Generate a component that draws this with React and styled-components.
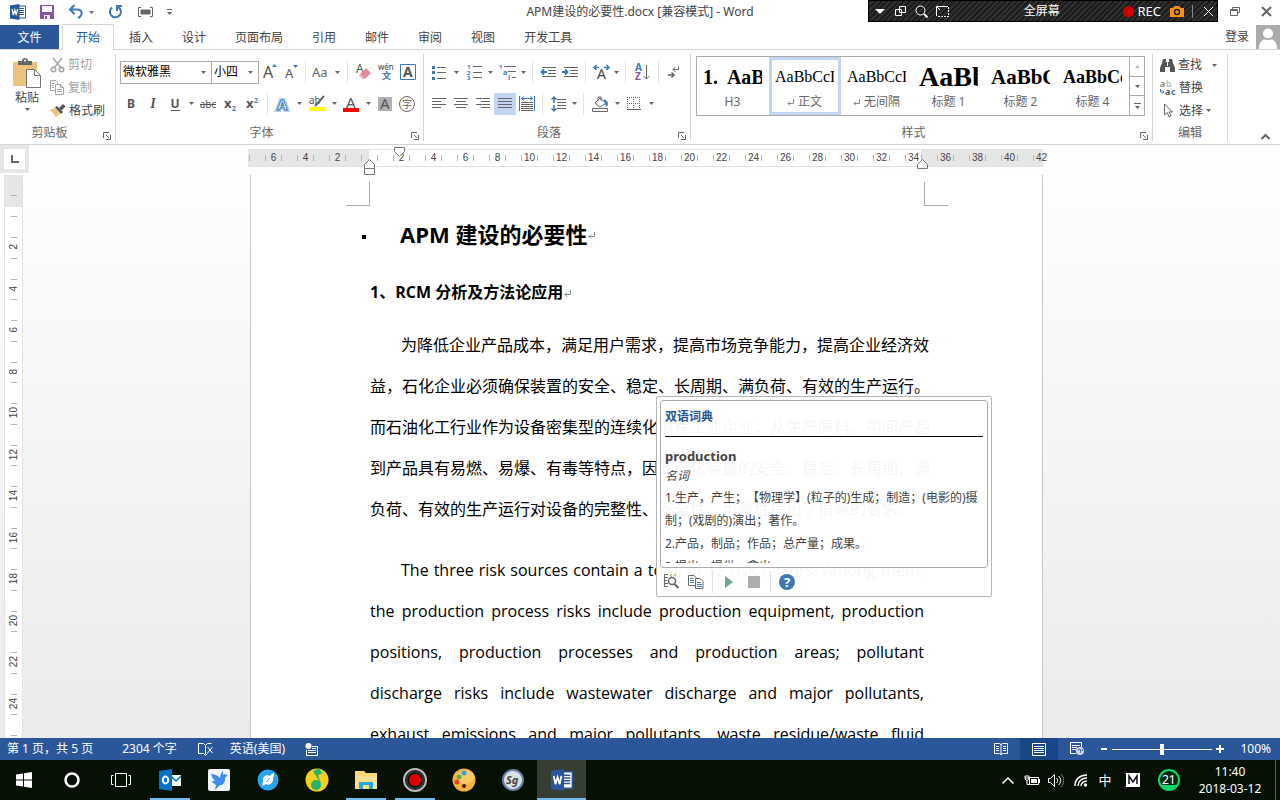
import React from 'react'
import styled, { createGlobalStyle, css } from 'styled-components'

const blue = '#2b579a'
const iconBlue = '#3e78b3'
const midGrey = '#666'
const line = '#d5d5d5'
const uiFont = '"Noto Sans", "Noto Sans CJK SC", sans-serif'
const bodyFont = '"Open Sans", "Noto Sans CJK SC", sans-serif'

const GlobalStyle = createGlobalStyle`
  * { box-sizing: border-box; }
  body {
    margin: 0;
    font: 12px/16px ${uiFont};
    color: #444;
    background: #fff;
    text-spacing-trim: space-all;
  }
  button, select, input {
    font: inherit;
    color: inherit;
    margin: 0;
    padding: 0;
    border: 0;
    background: none;
  }
  svg { display: block; flex: none; overflow: visible; }
  h1, h2, p { margin: 0; }
`

const Shell = styled.div`
  display: flex;
  flex-direction: column;
  height: 100vh;
  overflow: hidden;
`

/* title bar */

const TitleBar = styled.header`
  display: grid;
  grid-template-columns: 1fr auto 1fr;
  height: 24px;
  flex: none;
`

const QuickAccess = styled.div`
  display: flex;
  align-items: center;
  padding-left: 8px;
`

const Title = styled.div`
  line-height: 24px;
  white-space: nowrap;
`

const WindowControls = styled.div`
  display: flex;
  justify-content: flex-end;
`

const Recorder = styled.div`
  display: flex;
  align-items: center;
  width: 350px;
  height: 22px;
  border: 1px solid #000;
  color: #fff;
  background: repeating-linear-gradient(135deg, #1c1c1c 0 2px, #303030 2px 4px);
`

const RecorderTitle = styled.span`
  flex: 1;
  padding-left: 8px;
  text-align: center;
`

const RecLabel = styled.button`
  display: flex;
  align-items: center;
  gap: 3px;
  margin-right: 7px;
  font-size: 13px;
`

const RecDot = styled.span`
  width: 11px;
  height: 11px;
  border-radius: 50%;
  background: #d00000;
`

const IconButton = styled.button`
  display: flex;
  align-items: center;
  justify-content: center;
  flex: none;
  width: ${p => p.$w || 22}px;
  height: 22px;
  background: ${p => (p.$on ? '#c2d5f2' : 'none')};
`

/* tabs */

const TabRow = styled.nav`
  display: flex;
  height: 26px;
  flex: none;
  align-items: flex-end;
  border-bottom: 1px solid ${line};
`

const Tab = styled.button`
  height: 24px;
  padding: 0 13px;
  margin-right: 1px;
  border: 1px solid transparent;
  border-bottom: 0;
  ${p => p.$file && css`
    width: 59px;
    margin-right: 3px;
    color: #fff;
    background: ${blue};
  `}
  ${p => p.$active && css`
    height: 26px;
    margin-bottom: -1px;
    color: ${blue};
    border-color: ${line};
    background: #fff;
  `}
`

const Account = styled.a`
  display: flex;
  align-items: center;
  gap: 7px;
  margin-left: auto;
  color: #444;
  text-decoration: none;
`

/* ribbon */

const Ribbon = styled.section`
  display: flex;
  position: relative;
  height: 95px;
  flex: none;
  padding-top: 4px;
  border-bottom: 1px solid ${line};
`

const Group = styled.div`
  display: flex;
  flex-direction: column;
  flex: none;
  width: ${p => p.$w}px;
  height: 87px;
  border-right: 1px solid ${line};
`

const GroupBody = styled.div`
  flex: 1;
  padding-left: ${p => p.$left || 3}px;
`

const GroupLabel = styled.div`
  display: flex;
  height: 16px;
  color: #666;

  span {
    flex: 1;
    text-align: center;
  }
`

const Launcher = styled.button`
  display: flex;
  align-items: flex-end;
  justify-content: center;
  width: 16px;
  height: 15px;
`

const ToolRow = styled.div`
  display: flex;
  align-items: center;
  height: ${p => p.$h}px;
`

const Divider = styled.span`
  width: 1px;
  height: 22px;
  margin: 0 ${p => p.$m || 4}px;
  background: #e1e1e1;
`

const Combo = styled.label`
  display: flex;
  position: relative;
  width: ${p => p.$w}px;
  height: 23px;
  margin-right: -1px;
  border: 1px solid #ababab;

  select {
    appearance: none;
    width: 100%;
    padding-left: 2px;
    color: #000;
  }
  svg {
    position: absolute;
    right: 5px;
    top: 9px;
    pointer-events: none;
  }
`

const Clipboard = styled.div`
  display: flex;
  gap: 6px;
`

const PasteButton = styled.button`
  display: flex;
  flex-direction: column;
  align-items: center;
  width: 34px;
  padding-top: 4px;
  gap: 2px;
`

const SmallStack = styled.div`
  display: flex;
  flex-direction: column;
`

const SmallTool = styled.button`
  display: flex;
  align-items: center;
  gap: 3px;
  height: ${p => p.$h || 22}px;
  color: ${p => (p.$off ? '#a0a0a0' : '#444')};
  white-space: nowrap;

  > svg:last-child {
    margin-left: ${p => p.$caret || 0}px;
  }
`

const Gallery = styled.div`
  display: flex;
  width: 449px;
  height: 60px;
  margin-top: 2px;
  border: 1px solid #ababab;
`

const StyleCell = styled.button`
  display: flex;
  flex-direction: column;
  width: 72px;
  height: 58px;
  padding: 0 4px 0 3px;
  border: 3px solid ${p => (p.$on ? '#c2d5f2' : 'transparent')};
  color: #666;
`

const Sample = styled.span`
  width: 100%;
  height: 34px;
  overflow: hidden;
  text-align: left;
  white-space: pre;
  color: #000;
  font-family: "Liberation Serif", serif;
  font-size: ${p => p.$size}px;
  font-weight: ${p => (p.$bold ? 700 : 400)};
  line-height: 34px;
`

const StyleName = styled.span`
  display: flex;
  align-items: center;
  justify-content: center;
  gap: 4px;
  width: 100%;
`

const GalleryScroll = styled.div`
  display: flex;
  flex-direction: column;
  margin-left: auto;
  border-left: 1px solid #ababab;

  button {
    width: 14px;
    flex: 1;
    display: flex;
    align-items: center;
    justify-content: center;
  }
  button + button { border-top: 1px solid #ababab; }
`

const CollapseButton = styled.button`
  align-self: flex-end;
  margin-left: auto;
  padding: 0 10px 4px;
`

/* document area */

const Workspace = styled.main`
  display: grid;
  grid-template-columns: 28px 1fr 15px;
  grid-template-rows: 30px 1fr;
  flex: 1;
  min-height: 0;
  overflow: hidden;
  background: linear-gradient(#fff, #ebebeb);
`

const TabStop = styled.button`
  display: flex;
  align-items: center;
  justify-content: center;
  width: 29px;
  height: 28px;
  border: 4px solid #e6e6e6;
  background: #fff;
`

const RulerRow = styled.div`
  grid-column: 2 / 4;
  display: flex;
  justify-content: center;
  padding: 4px 17px 0 0;
`

const Ruler = styled.div`
  position: relative;
  display: flex;
  width: 795px;
  height: 18px;
  padding-left: 1px;
  border: solid #e1e1e1;
  border-width: 1px 0;
  background: linear-gradient(90deg, #e6e6e6 121px, #fff 121px 673px, #e6e6e6 673px);
`

const RulerCell = styled.span`
  display: grid;
  grid-template-columns: 16px 16px;
  align-items: center;
  flex: none;
  font: 10px/16px "Liberation Sans", sans-serif;
  text-align: center;

  i {
    height: 6px;
    border-left: 1px solid #b5b5b5;
  }
  b {
    display: flex;
    align-items: center;
    justify-content: center;
    font-weight: 400;
  }
  b::before {
    content: '';
    height: 6px;
    border-left: 1px solid #b5b5b5;
    margin-right: auto;
  }
  b::after {
    content: '';
    margin-left: auto;
  }
`

const RulerNumber = styled.span`
  width: 14px;
  margin: 0 -1px;
`

const Marker = styled.span`
  position: absolute;
  left: ${p => p.$x}px;
  top: ${p => p.$y}px;
`

const SideRuler = styled.div`
  width: 19px;
  margin-left: 4px;
  overflow: hidden;
  border: solid #e1e1e1;
  border-width: 0 1px;
  background: linear-gradient(#e6e6e6 32px, #fff 32px);
`

const SideStart = styled.div`
  height: 41px;
  padding-top: 20px;

  &::before {
    content: '';
    display: block;
    width: 6px;
    margin: 0 auto;
    border-top: 1px solid #b5b5b5;
  }
`

const SideCell = styled.div`
  display: grid;
  grid-template-rows: 21px 1fr;
  justify-items: center;
  height: 42px;
  font: 10px/10px "Liberation Sans", sans-serif;

  &:nth-child(odd) { height: 41px; }

  i {
    width: 6px;
    height: 1px;
    background: #b5b5b5;
  }
  b {
    display: flex;
    flex-direction: column;
    align-items: center;
    font-weight: 400;
  }
  b::before {
    content: '';
    width: 6px;
    height: 1px;
    margin-bottom: 4px;
    background: #b5b5b5;
  }
  span {
    writing-mode: vertical-rl;
    transform: rotate(180deg);
    margin-top: ${p => (p.$wide ? -1 : 2)}px;
  }
`

const PageHolder = styled.div`
  display: flex;
  justify-content: center;
`

const Page = styled.article`
  position: relative;
  width: 793px;
  border: solid #c6c6c6;
  border-width: 0 1px;
  background: #fff;
  color: #000;
  font: 16px/41px ${bodyFont};
`

const CropMarks = styled.div`
  display: flex;
  justify-content: space-between;
  padding: 7px 94px 0 95px;

  span {
    width: 24px;
    height: 24px;
    border: solid #ababab;
    border-width: 0 1px 1px 0;
  }
  span + span { border-width: 0 0 1px 1px; }
`

const TextArea = styled.div`
  padding: 8px 118px 0 119px;
`

const DocTitle = styled.h1`
  display: flex;
  align-items: center;
  gap: 1px;
  margin-left: -8px;
  font-size: 22px;
  line-height: 41px;

  &::before {
    content: '';
    width: 4px;
    height: 4px;
    margin: 4px 33px 0 0;
    background: #000;
  }
`

const DocHeading = styled.h2`
  display: flex;
  align-items: center;
  gap: 1px;
  margin: 17px 0 12px;
  font-size: 16px;
`

const Paragraph = styled.p`
  margin-bottom: 20px;
`

const Line = styled.span`
  display: block;
  white-space: nowrap;
  text-align: justify;
  text-align-last: ${p => (p.$last ? 'left' : 'justify')};
  padding-left: ${p => (p.$indent ? 31 : 0)}px;
`

/* dictionary pop-up */

const Popup = styled.aside`
  position: absolute;
  left: 405px;
  top: 221px;
  width: 336px;
  height: 201px;
  padding: 3px;
  border: 1px solid #b5b5b5;
  border-radius: 2px;
  background: rgba(255, 255, 255, 0.96);
  color: #444;
  font: 12px/23px ${uiFont};
`

const Entry = styled.div`
  height: 168px;
  padding: 4px;
  border: 1px solid #ababab;
  border-radius: 3px;
`

const EntryClip = styled.div`
  height: 158px;
  overflow: hidden;
`

const EntryTitle = styled.div`
  height: 32px;
  border-bottom: 1px solid #000;
  color: ${blue};
  font-weight: 700;
`

const EntryWord = styled.div`
  margin-top: 9px;
  line-height: 20px;
  font-size: 13px;
  font-weight: 700;
`

const EntryKind = styled.div`
  line-height: 20px;
  font-style: italic;
`

const PopupTools = styled.div`
  display: flex;
  align-items: center;
  height: 27px;
`

/* status bar */

const StatusBar = styled.footer`
  display: flex;
  align-items: center;
  flex: none;
  height: 22px;
  padding: 0 9px 0 7px;
  color: #fff;
  background: ${blue};
`

const StatusItem = styled.button`
  height: 22px;
  margin-right: ${p => p.$gap || 0}px;
  line-height: 20px;
  white-space: nowrap;
`

const ZoomLevel = styled(StatusItem)`
  width: 43px;
  text-align: right;
`

const ViewButton = styled(IconButton)`
  width: 38px;
  background: ${p => (p.$on ? '#19478a' : 'none')};
`

const Views = styled.div`
  display: flex;
  margin-left: auto;
`

const ZoomRange = styled.input`
  appearance: none;
  width: 100px;
  height: 22px;
  background: linear-gradient(#fff, #fff) center / 100% 1px no-repeat;

  &::-webkit-slider-thumb {
    appearance: none;
    width: 4px;
    height: 11px;
    background: #fff;
  }
`

/* taskbar */

const Taskbar = styled.footer`
  display: flex;
  flex: none;
  height: 40px;
  background: #061004;
  color: #fff;
`

const TaskButton = styled.button`
  display: flex;
  align-items: center;
  justify-content: center;
  width: ${p => p.$w || 49}px;
  height: 40px;
  ${p => p.$running && css`
    background: linear-gradient(#76b9ed, #76b9ed) center bottom / ${p.$active ? '100%' : '40px'} 2px no-repeat ${p.$active ? '#363e34' : ''};
  `}
`

const Tray = styled.div`
  display: flex;
  align-items: center;
  margin-left: auto;
  padding-right: 4px;
`

const InputMode = styled(IconButton)`
  font-size: 13px;
`

const Clock = styled.button`
  width: 84px;
  line-height: 17px;
  text-align: center;
`

const ShowDesktop = styled.span`
  width: 1px;
  height: 40px;
  margin-left: 3px;
  background: #5a6058;
`

/* icons */

const Icon = ({ w = 16, h, children, ...rest }) => (
  <svg width={w} height={h || w} viewBox={`0 0 ${w} ${h || w}`} fill="none" stroke={midGrey} aria-hidden="true" {...rest}>
    {children}
  </svg>
)

const Glyph = ({ x = 0, y, size = 12, color = midGrey, bold, italic, family, children }) => (
  <text x={x} y={y} fontSize={size} fill={color} stroke="none" fontWeight={bold ? 700 : 400}
    fontStyle={italic ? 'italic' : 'normal'} fontFamily={family || '"Noto Sans", "Noto Sans CJK SC", sans-serif'}>
    {children}
  </text>
)

const Caret = ({ color = midGrey }) => (
  <Icon w={5} h={3} stroke="none" fill={color}><path d="M0 0h5L2.500 3z" /></Icon>
)

const Drop = ({ w = 10, label = '更多' }) => (
  <IconButton $w={w} aria-label={label}><Caret /></IconButton>
)

const WordIcon = ({ w = 16 }) => (
  <svg width={w} height={w} viewBox="0 0 16 16" aria-hidden="true">
    <path d="M8 2h7.500v12H8z" fill="#fff" stroke={blue} />
    <path d="M9 4.500h5M9 6.500h5M9 8.500h5M9 10.500h5" stroke={blue} />
    <path d="M0 1.500L9.500 0v16L0 14.500z" fill={blue} />
    <path d="M2 5l1.300 6L4.800 6l1.500 5L7.600 5" fill="none" stroke="#fff" strokeWidth="1.300" />
  </svg>
)

const SaveIcon = () => (
  <Icon w={14} stroke="none">
    <path d="M0 0h14v14H0z" fill="#8652a5" />
    <path d="M2 1h10v6H2zM4 10h6v4H4z" fill="#fff" />
    <path d="M5 11h2v3H5z" fill="#8652a5" />
  </Icon>
)

const UndoIcon = () => (
  <Icon stroke={iconBlue} strokeWidth="2">
    <path d="M6.500 1L2 5.500 6.500 10M2.500 5.500H9c6 0 6 6 1 8.500" />
  </Icon>
)

const RedoIcon = () => (
  <Icon stroke={iconBlue} strokeWidth="2">
    <path d="M5 3.500a5.500 5.500 0 1 0 6-.5M10 7V2h5" />
  </Icon>
)

const TouchIcon = () => (
  <Icon w={15} h={10}>
    <path d="M3 .5H.5v9H3M12 .5h2.500v9H12" />
    <path d="M3 3h9v4H3z" fill={midGrey} />
  </Icon>
)

const Avatar = () => (
  <Icon w={24} stroke="none">
    <path d="M0 0h24v24H0z" fill="#ababab" />
    <circle cx="12" cy="8.500" r="5" fill="#fff" />
    <path d="M3 24c0-7 3-9.500 6-9.500 2 1 4 1 6 0 3 0 6 2.500 6 9.500z" fill="#fff" />
  </Icon>
)

const PasteIcon = () => (
  <Icon w={28} h={30} stroke="none">
    <path d="M0 4h24v24H0z" fill="#ecc27d" />
    <path d="M5 7V3h4c0-4 6-4 6 0h4v4z" fill="#666" />
    <circle cx="12" cy="2.500" r="1" fill="#fff" />
    <path d="M13.500 11.500h8l6 6v12h-14z" fill="#fff" stroke="#777" />
    <path d="M21.500 11.500v6h6" fill="none" stroke="#777" />
  </Icon>
)

const CutIcon = () => (
  <Icon w={15} stroke="#a6a6a6" strokeWidth="1.500">
    <path d="M3 0l8 10M12 0L4 10" />
    <circle cx="3.500" cy="11.500" r="2.300" />
    <circle cx="11.500" cy="11.500" r="2.300" />
  </Icon>
)

const CopyIcon = () => (
  <Icon w={15} stroke="#a6a6a6">
    <path d="M5 10.500H.5v-10h5l2 2V4M5.500 4.500h5l3 3v7h-8zM10.500 4.500v3h3M2 3.500h3M2 5.500h2M2 7.500h2M7 9.500h5M7 11.500h5" />
  </Icon>
)

const BrushIcon = () => (
  <Icon w={16} h={14} stroke="none">
    <path d="M0 6l5-2 5 5-4 5c-1-3-3-5-6-8z" fill="#ecc27d" />
    <path d="M5 3.500l2-1.500 6 6-2 2z" fill="#555" />
    <path d="M9 4l4-4 2.500 2.500-4 4z" fill="#555" />
  </Icon>
)

const LauncherIcon = () => (
  <Icon w={8}>
    <path d="M.5 6V.5H6M3 3l3 3M7.500 3v4.500H3" />
  </Icon>
)

const GrowFont = ({ down }) => (
  <Icon w={16} h={18}>
    <Glyph x={2} y={15} size={down ? 13 : 16} color="#555">A</Glyph>
    <path d={down ? 'M10 2h5l-2.500 3z' : 'M11 4h5l-2.500-3z'} fill={iconBlue} stroke="none" />
  </Icon>
)

const CaseIcon = () => <Icon w={16} h={16}><Glyph y={13} size={13}>Aa</Glyph></Icon>

const EraserIcon = () => (
  <Icon>
    <Glyph x={1} y={9} size={12} color="#555">A</Glyph>
    <path d="M5 10l6-6 5 5-6 6H8z" fill="#e58a9a" stroke="none" />
    <path d="M5 10l5 5H7l-3-3z" fill="#f3bcc6" stroke="none" />
  </Icon>
)

const PhoneticIcon = () => (
  <Icon w={16}>
    <Glyph x={0} y={6} size={8} color="#444">wén</Glyph>
    <Glyph x={4} y={15} size={9} color={iconBlue} bold>文</Glyph>
  </Icon>
)

const CharBorder = () => (
  <Icon w={16}>
    <path d="M.5.5h15v15H.5z" stroke={iconBlue} />
    <Glyph x={3} y={13} size={14} color="#555" bold>A</Glyph>
  </Icon>
)

const TextTool = ({ text, bold, italic, underline, strike, size = 12 }) => (
  <Icon w={18} h={16}>
    <text x="9" y="12" textAnchor="middle" fontSize={size} fill="#555" stroke="none" fontWeight={bold ? 700 : 400}
      fontStyle={italic ? 'italic' : 'normal'} fontFamily={italic ? '"Liberation Serif", serif' : '"Noto Sans", sans-serif'}>{text}</text>
    {underline && <path d="M5 14.500h9" stroke="#555" />}
    {strike && <path d="M1 8.500h16" stroke="#555" />}
  </Icon>
)

const ScriptTool = ({ up }) => (
  <Icon w={16}>
    <Glyph x={2} y={12} size={13} color="#555" bold>x</Glyph>
    <Glyph x={10} y={up ? 7 : 15} size={7} color={iconBlue} bold>2</Glyph>
  </Icon>
)

const EffectIcon = () => (
  <Icon w={14}>
    <text x="1" y="13" fontSize="15" fontWeight="700" fontFamily='"Noto Sans", sans-serif' fill="#fff" stroke="#b5d2ee" strokeWidth="4">A</text>
    <text x="1" y="13" fontSize="15" fontWeight="700" fontFamily='"Noto Sans", sans-serif' fill="#fff" stroke={iconBlue}>A</text>
  </Icon>
)

const HighlightIcon = () => (
  <Icon w={17}>
    <Glyph x={1} y={9} size={10} color="#555">ab</Glyph>
    <path d="M16 1L9 9l-2 2" strokeWidth="2" />
    <path d="M1 12h16v4H1z" fill="#ff0" stroke="none" />
  </Icon>
)

const FontColorIcon = () => (
  <Icon w={16}>
    <Glyph x={3} y={12} size={15} color="#555">A</Glyph>
    <path d="M0 12h16v4H0z" fill="#f00" stroke="none" />
  </Icon>
)

const ShadeIcon = () => (
  <Icon w={14}>
    <path d="M0 0h14v14H0z" fill="#b0b0b0" stroke="none" />
    <Glyph x={2} y={12} size={15} color="#555">A</Glyph>
  </Icon>
)

const CircleChar = () => (
  <Icon>
    <circle cx="8" cy="8" r="7.500" />
    <Glyph x={3} y={12} size={10}>字</Glyph>
  </Icon>
)

const BulletsIcon = () => (
  <Icon w={14} h={15}>
    <path d="M5 2.500h9M5 7.500h9M5 13.500h9" />
    <path d="M0 1h3v3H0zM0 6h3v3H0zM0 12h3v3H0z" fill={iconBlue} stroke="none" />
  </Icon>
)

const NumbersIcon = () => (
  <Icon w={15} h={16}>
    <path d="M6 2.500h9M6 8.500h9M6 13.500h9" />
    <Glyph y={5} size={6} color={iconBlue} bold>1</Glyph>
    <Glyph y={11} size={6} color={iconBlue} bold>2</Glyph>
    <Glyph y={16} size={6} color={iconBlue} bold>3</Glyph>
  </Icon>
)

const MultiIcon = () => (
  <Icon w={17}>
    <path d="M5 2.500h12M9 7.500h8M13 13.500h4" />
    <Glyph y={5} size={6} color={iconBlue} bold>1</Glyph>
    <Glyph x={4} y={11} size={7} color={iconBlue} bold>a</Glyph>
    <Glyph x={9} y={16} size={7} color={iconBlue} bold>i</Glyph>
  </Icon>
)

const IndentIcon = ({ right }) => (
  <Icon w={16} h={11}>
    <path d="M2 .5h14M8 3.500h8M8 6.500h8M2 9.500h14" />
    <path d={right ? 'M0 5h5M3 2.500L5.500 5 3 7.500' : 'M7 5H1.500M4 2.500L1.500 5 4 7.500'} stroke={iconBlue} strokeWidth="2" />
  </Icon>
)

const AsianIcon = () => (
  <Icon w={17}>
    <Glyph x={4} y={15} size={14} color="#444">A</Glyph>
    <path d="M6 3.500H1M3.500 1L1 3.500 3.500 6M11 3.500h5M13.500 1L16 3.500 13.500 6" stroke={iconBlue} strokeWidth="1.500" />
  </Icon>
)

const SortIcon = () => (
  <Icon w={14} h={16}>
    <Glyph y={7} size={10} color={iconBlue} bold>A</Glyph>
    <Glyph y={16} size={10} color="#8652a5" bold>Z</Glyph>
    <path d="M11.500 1v14M8.500 12l3 3 3-3" />
  </Icon>
)

const MarksIcon = () => (
  <Icon w={12} h={14}>
    <path d="M10.500 1v3.500H5M7.500 2L5 4.500 7.500 7" />
    <path d="M0 10h6M3.500 7.500L6 10l-2.500 2.500" strokeWidth="1.500" />
  </Icon>
)

const alignPaths = {
  left: 'M0 .5h14M0 3.500h9M0 6.500h14M0 9.500h9',
  center: 'M0 .5h14M2 3.500h10M0 6.500h14M2 9.500h10',
  right: 'M0 .5h14M5 3.500h9M0 6.500h14M5 9.500h9',
  justify: 'M0 .5h14M0 3.500h14M0 6.500h14M0 9.500h14'
}

const AlignIcon = ({ kind }) => <Icon w={14} h={11}><path d={alignPaths[kind]} /></Icon>

const DistributeIcon = () => (
  <Icon w={16} h={15}>
    <path d="M2 6.500h12M2 8.500h12M2 10.500h12M2 12.500h12M2 14.500h12" />
    <path d="M.5 0v15M15.500 0v15M2 2.500h12M5 .5L2.500 2.500 5 4.500M11 .5l2.500 2-2.500 2" stroke={iconBlue} />
  </Icon>
)

const SpacingIcon = () => (
  <Icon w={15} h={16}>
    <path d="M6 3.500h9M6 6.500h9M6 9.500h9M6 12.500h9" />
    <path d="M3 1v6M3 9v6M.5 3.500L3 1l2.500 2.500M.5 12.500L3 15l2.500-2.500" stroke={iconBlue} strokeWidth="1.500" />
  </Icon>
)

const BucketIcon = () => (
  <Icon w={17} h={16}>
    <path d="M8 2l6 5-6 4-5-4zM6 5V1h3v4" />
    <path d="M12 4c3 0 4 3 3 6-2 0-1-4-3-6z" fill={iconBlue} stroke={iconBlue} />
    <path d="M.5 12.500h15v3H.5z" fill="#fff" />
  </Icon>
)

const BordersIcon = () => (
  <Icon w={14} h={13}>
    <path d="M0 .5h13M0 6.500h13M.5 0v12M6.500 0v12M12.500 0v12" strokeDasharray="1 1" />
    <path d="M0 12.500h14" />
  </Icon>
)

const BinocularIcon = () => (
  <Icon w={15} h={13} stroke="none" fill="#555">
    <path d="M3 0h3v3h3V0h3l1 4 2 5v4h-5V8H5v5H0V9l2-5z" />
    <path d="M7 3h1v4H7z" fill="#fff" />
  </Icon>
)

const ReplaceIcon = () => (
  <Icon w={16}>
    <Glyph x={0} y={7} size={9} color="#555">a</Glyph>
    <Glyph x={6} y={7} size={9} color="#aaa">b</Glyph>
    <Glyph x={5} y={15} size={9} bold color="#555">a</Glyph>
    <Glyph x={11} y={15} size={9} bold color={iconBlue}>c</Glyph>
    <path d="M.5 9v3H4M2.500 10.500L4 12l-1.500 1.500" stroke={iconBlue} />
  </Icon>
)

const CursorIcon = () => (
  <Icon w={16} h={15}>
    <path d="M4.500 1v11l2.800-2.500 1.700 4.500 2-1-2-4h3.500z" />
  </Icon>
)

const ReturnMark = () => (
  <Icon w={7} h={8} stroke="#888">
    <path d="M6.500 1v4.500H1M3 3.500l-2 2 2 2" />
  </Icon>
)

/* parts */

const styleList = [
  { sample: '1.  AaB', name: 'H3', size: 20, bold: true },
  { sample: 'AaBbCcDd', name: '正文', size: 16, on: true, mark: true },
  { sample: 'AaBbCcDd', name: '无间隔', size: 16, mark: true },
  { sample: 'AaBb', name: '标题 1', size: 28, bold: true },
  { sample: 'AaBbC', name: '标题 2', size: 21, bold: true },
  { sample: 'AaBbCc', name: '标题 4', size: 18, bold: true }
]

const tabs = ['插入', '设计', '页面布局', '引用', '邮件', '审阅', '视图', '开发工具']

const TopBar = () => (
  <TitleBar>
    <QuickAccess>
      <IconButton $w={20} aria-label="Word"><WordIcon /></IconButton>
      <IconButton $w={38} aria-label="保存"><SaveIcon /></IconButton>
      <IconButton $w={20} aria-label="撤消"><UndoIcon /></IconButton>
      <Drop label="撤消选项" />
      <IconButton $w={38} aria-label="重复"><RedoIcon /></IconButton>
      <IconButton $w={22} aria-label="触摸模式"><TouchIcon /></IconButton>
      <IconButton $w={26} aria-label="自定义">
        <Icon w={7} h={6}><path d="M1 .5h5" /><path d="M1 3h5L3.500 6z" fill={midGrey} stroke="none" /></Icon>
      </IconButton>
    </QuickAccess>
    <Title>APM建设的必要性.docx [兼容模式] - Word</Title>
    <WindowControls>
      <Recorder>
        <IconButton $w={22} aria-label="菜单"><Icon w={10} h={5} fill="#fff" stroke="none"><path d="M0 0h10L5 5z" /></Icon></IconButton>
        <IconButton $w={19} aria-label="区域"><Icon w={11} stroke="#fff"><path d="M4.500.5h6v6h-6zM.5 3.500h6v6h-6z" /></Icon></IconButton>
        <IconButton $w={22} aria-label="缩放"><Icon w={13} stroke="#fff"><circle cx="5.500" cy="5.500" r="4.500" /><path d="M9 9l3.500 3.500" strokeWidth="2" /></Icon></IconButton>
        <IconButton $w={20} aria-label="选区"><Icon w={13} h={12} stroke="#fff"><path d="M.5 11V1.500H12" /><path d="M12.500 2v9.500H1" strokeDasharray="2 1" /><path d="M1 2l3 3" /></Icon></IconButton>
        <RecorderTitle>全屏幕</RecorderTitle>
        <RecLabel><RecDot />REC</RecLabel>
        <IconButton $w={17} aria-label="截图">
          <Icon w={14} h={11} stroke="none"><path d="M0 2h3l2-2h4l2 2h3v9H0z" fill="#ff8c1a" /><circle cx="7" cy="6" r="2.500" fill="#ff8c1a" stroke="#222" strokeWidth="1.500" /></Icon>
        </IconButton>
        <IconButton $w={14} aria-label="更多"><Icon w={1} h={13} stroke="#888"><path d="M.5 0v13" /></Icon></IconButton>
        <IconButton $w={18} aria-label="关闭录制"><Icon w={9} stroke="#fff"><path d="M0 0l9 9M9 0L0 9" /></Icon></IconButton>
      </Recorder>
      <IconButton $w={34} aria-label="还原"><Icon w={10} h={9}><path d="M2.500 2V.5h7v5H8" /><path d="M.5 2.500h7v6h-7zM.5 3.500h7" /></Icon></IconButton>
      <IconButton $w={28} aria-label="关闭"><Icon w={9} strokeWidth="2"><path d="M0 0l9 9M9 0L0 9" /></Icon></IconButton>
    </WindowControls>
  </TitleBar>
)

const ClipboardGroup = () => (
  <Group $w={116}>
    <GroupBody $left={10}>
      <Clipboard>
        <PasteButton><PasteIcon />粘贴<Caret /></PasteButton>
        <SmallStack>
          <SmallTool $off><CutIcon />剪切</SmallTool>
          <SmallTool $off $h={23}><CopyIcon />复制</SmallTool>
          <SmallTool $h={23}><BrushIcon />格式刷</SmallTool>
        </SmallStack>
      </Clipboard>
    </GroupBody>
    <GroupLabel><span>剪贴板</span><Launcher aria-label="剪贴板选项"><LauncherIcon /></Launcher></GroupLabel>
  </Group>
)

const FontGroup = () => (
  <Group $w={308}>
    <GroupBody $left={4}>
      <ToolRow $h={36}>
        <Combo $w={92}><select aria-label="字体"><option>微软雅黑</option></select><Caret /></Combo>
        <Combo $w={48}><select aria-label="字号"><option>小四</option></select><Caret /></Combo>
        <IconButton aria-label="增大字号"><GrowFont /></IconButton>
        <IconButton aria-label="减小字号"><GrowFont down /></IconButton>
        <Divider $m={3} />
        <IconButton aria-label="更改大小写"><CaseIcon /></IconButton>
        <Drop w={13} />
        <Divider $m={3} />
        <IconButton $w={24} aria-label="清除格式"><EraserIcon /></IconButton>
        <IconButton aria-label="拼音指南"><PhoneticIcon /></IconButton>
        <IconButton aria-label="字符边框"><CharBorder /></IconButton>
      </ToolRow>
      <ToolRow $h={27}>
        <IconButton aria-label="加粗"><TextTool text="B" bold /></IconButton>
        <IconButton aria-label="倾斜"><TextTool text="I" italic bold size={14} /></IconButton>
        <IconButton aria-label="下划线"><TextTool text="U" bold underline /></IconButton>
        <Drop w={11} />
        <IconButton aria-label="删除线"><TextTool text="abc" strike size={10} /></IconButton>
        <IconButton aria-label="下标"><ScriptTool /></IconButton>
        <IconButton aria-label="上标"><ScriptTool up /></IconButton>
        <Divider />
        <IconButton aria-label="文本效果"><EffectIcon /></IconButton>
        <Drop />
        <IconButton $w={24} aria-label="突出显示"><HighlightIcon /></IconButton>
        <Drop w={12} />
        <IconButton aria-label="字体颜色"><FontColorIcon /></IconButton>
        <Drop w={12} />
        <IconButton aria-label="字符底纹"><ShadeIcon /></IconButton>
        <IconButton aria-label="带圈字符"><CircleChar /></IconButton>
      </ToolRow>
    </GroupBody>
    <GroupLabel><span>字体</span><Launcher aria-label="字体选项"><LauncherIcon /></Launcher></GroupLabel>
  </Group>
)

const ParagraphGroup = () => (
  <Group $w={267}>
    <GroupBody $left={4}>
      <ToolRow $h={36}>
        <IconButton aria-label="项目符号"><BulletsIcon /></IconButton>
        <Drop w={12} />
        <IconButton $w={24} aria-label="编号"><NumbersIcon /></IconButton>
        <Drop w={9} />
        <IconButton $w={24} aria-label="多级列表"><MultiIcon /></IconButton>
        <Drop w={9} />
        <Divider />
        <IconButton aria-label="减少缩进"><IndentIcon /></IconButton>
        <IconButton aria-label="增加缩进"><IndentIcon right /></IconButton>
        <Divider />
        <IconButton aria-label="中文版式"><AsianIcon /></IconButton>
        <Drop w={9} />
        <Divider />
        <IconButton $w={24} aria-label="排序"><SortIcon /></IconButton>
        <Divider />
        <IconButton aria-label="编辑标记"><MarksIcon /></IconButton>
      </ToolRow>
      <ToolRow $h={27}>
        <IconButton aria-label="左对齐"><AlignIcon kind="left" /></IconButton>
        <IconButton aria-label="居中"><AlignIcon kind="center" /></IconButton>
        <IconButton aria-label="右对齐"><AlignIcon kind="right" /></IconButton>
        <IconButton $on aria-label="两端对齐"><AlignIcon kind="justify" /></IconButton>
        <IconButton aria-label="分散对齐"><DistributeIcon /></IconButton>
        <Divider />
        <IconButton aria-label="行距"><SpacingIcon /></IconButton>
        <Drop />
        <Divider />
        <IconButton $w={24} aria-label="底纹"><BucketIcon /></IconButton>
        <Drop />
        <IconButton $w={24} aria-label="边框"><BordersIcon /></IconButton>
        <Drop />
      </ToolRow>
    </GroupBody>
    <GroupLabel><span>段落</span><Launcher aria-label="段落选项"><LauncherIcon /></Launcher></GroupLabel>
  </Group>
)

const StylesGroup = () => (
  <Group $w={462}>
    <GroupBody $left={5}>
      <Gallery>
        {styleList.map(s => (
          <StyleCell key={s.name} $on={s.on}>
            <Sample $size={s.size} $bold={s.bold}>{s.sample}</Sample>
            <StyleName>{s.mark && <ReturnMark />}{s.name}</StyleName>
          </StyleCell>
        ))}
        <GalleryScroll>
          <button aria-label="上一行"><Icon w={5} h={3} stroke="none" fill="#bbb"><path d="M0 3h5L2.500 0z" /></Icon></button>
          <button aria-label="下一行"><Caret /></button>
          <button aria-label="其他"><Icon w={7} h={6}><path d="M0 .5h7" /><path d="M1 3h5L3.500 6z" fill={midGrey} stroke="none" /></Icon></button>
        </GalleryScroll>
      </Gallery>
    </GroupBody>
    <GroupLabel><span>样式</span><Launcher aria-label="样式选项"><LauncherIcon /></Launcher></GroupLabel>
  </Group>
)

const EditGroup = () => (
  <Group $w={75}>
    <GroupBody $left={7}>
      <SmallTool $caret={7}><BinocularIcon />查找<Caret /></SmallTool>
      <SmallTool $h={23}><ReplaceIcon />替换</SmallTool>
      <SmallTool $h={23}><CursorIcon />选择<Caret /></SmallTool>
    </GroupBody>
    <GroupLabel><span>编辑</span></GroupLabel>
  </Group>
)

const rulerMarks = ['6', '4', '2', '', ...Array.from({ length: 21 }, (_, i) => String(2 * i + 2))]
const sideMarks = Array.from({ length: 13 }, (_, i) => 2 * i + 2)

const Dictionary = () => (
  <Popup>
    <Entry>
      <EntryClip>
        <EntryTitle>双语词典</EntryTitle>
        <EntryWord>production</EntryWord>
        <EntryKind>名词</EntryKind>
        <div>1.生产，产生；【物理学】(粒子的)生成；制造；(电影的)摄制；(戏剧的)演出；著作。</div>
        <div>2.产品，制品；作品；总产量；成果。</div>
        <div>3.提出，提供；拿出</div>
      </EntryClip>
    </Entry>
    <PopupTools>
      <IconButton aria-label="查找">
        <Icon w={17}><path d="M5 1.500H1.500v12H5M1 4.500h4M1 7.500h3M1 10.500h4" /><path d="M6 3l3-3v4zM10 2l3-2v4z" fill="#ecc27d" stroke="none" /><circle cx="9" cy="8" r="3.500" fill="#fff" strokeWidth="1.500" /><path d="M11.500 11l4 4" strokeWidth="2" /></Icon>
      </IconButton>
      <IconButton $w={28} aria-label="复制">
        <Icon w={16} h={14}><path d="M7 10.500H.5V.5H6l2 2v1" /><path d="M7.500 3.500H12l3 3v7H7.500z" fill="#fff" /><path d="M2 3.500h3M2 5.500h4M2 7.500h4M9 7.500h4M9 9.500h5M9 11.500h5" stroke={iconBlue} /></Icon>
      </IconButton>
      <Divider $m={2} />
      <IconButton $w={28} aria-label="播放"><Icon w={8} h={12} stroke="none" fill="#6fa58f"><path d="M0 0l8 6-8 6z" /></Icon></IconButton>
      <IconButton aria-label="停止"><Icon w={12} stroke="none" fill="#b0adb0"><path d="M0 0h12v12H0z" /></Icon></IconButton>
      <Divider $m={5} />
      <IconButton aria-label="帮助">
        <Icon><circle cx="8" cy="8" r="8" fill={iconBlue} stroke="none" /><Glyph x={5} y={13} size={13} color="#fff" bold>?</Glyph></Icon>
      </IconButton>
    </PopupTools>
  </Popup>
)

const Document = () => (
  <Page>
    <CropMarks><span /><span /></CropMarks>
    <TextArea>
      <DocTitle>APM 建设的必要性<ReturnMark /></DocTitle>
      <DocHeading>1、RCM 分析及方法论应用<ReturnMark /></DocHeading>
      <Paragraph>
        <Line $indent>为降低企业产品成本，满足用户需求，提高市场竞争能力，提高企业经济效</Line>
        <Line>益，石化企业必须确保装置的安全、稳定、长周期、满负荷、有效的生产运行。</Line>
        <Line>而石油化工行业作为设备密集型的连续化流程工业企业，从生产原料、中间产品</Line>
        <Line>到产品具有易燃、易爆、有毒等特点，因此石化装置的安全、稳定、长周期、满</Line>
        <Line $last>负荷、有效的生产运行对设备的完整性、安全性、可靠性提出了很高的要求。</Line>
      </Paragraph>
      <Paragraph>
        <Line $indent>The three risk sources contain a total of 12 risk factors. Among them,</Line>
        <Line>the production process risks include production equipment, production</Line>
        <Line>positions, production processes and production areas; pollutant</Line>
        <Line>discharge risks include wastewater discharge and major pollutants,</Line>
        <Line>exhaust emissions and major pollutants, waste residue/waste fluid</Line>
      </Paragraph>
    </TextArea>
    <Dictionary />
  </Page>
)

const Status = () => (
  <StatusBar>
    <StatusItem $gap={29}>第 1 页，共 5 页</StatusItem>
    <StatusItem $gap={21}>2304 个字</StatusItem>
    <StatusItem $gap={17} aria-label="校对">
      <Icon w={15} h={13} stroke="#fff"><path d="M7.500 2.500L5.500.5h-5v10h5l2 2 2-2M7.500 2.500v9M7.500 2.500l2-2h4M9.500 4l5 6M14.500 4l-5 6" /></Icon>
    </StatusItem>
    <StatusItem $gap={20}>英语(美国)</StatusItem>
    <StatusItem aria-label="宏">
      <Icon w={14} h={13} stroke="#fff"><path d="M1.500 7v5.500h11v-9H7M3 7.500h8M3 9.500h8M7 5.500h4" /><circle cx="3.500" cy="3" r="3" fill="#fff" stroke="none" /></Icon>
    </StatusItem>
    <Views>
      <ViewButton aria-label="阅读视图"><Icon w={14} h={12} stroke="#fff"><path d="M7 1.500L5.500.5h-5v10h5l1.500 1 1.500-1h5V.5h-5zM7 1v11M2 3.500h3M2 5.500h3M2 7.500h3M9 3.500h3M9 5.500h3M9 7.500h3" /></Icon></ViewButton>
      <ViewButton $on aria-label="页面视图"><Icon w={14} h={13} stroke="#fff"><path d="M.5.5h13v12H.5zM2 3.500h10M2 5.500h10M2 7.500h10M2 9.500h10" /></Icon></ViewButton>
      <ViewButton aria-label="Web 版式视图"><Icon w={15} h={14} stroke="#fff"><path d="M6 11.500H.5V.5h11V5M2 3.500h8M2 5.500h5M2 7.500h4" /><circle cx="10" cy="9" r="4" fill="#cfdcf0" stroke="none" /><path d="M8 8l2-1 1 2-1 2M12 7l1 2" stroke={blue} /></Icon></ViewButton>
    </Views>
    <IconButton $w={16} aria-label="缩小"><Icon w={6} h={2} stroke="#fff" strokeWidth="2"><path d="M0 1h6" /></Icon></IconButton>
    <ZoomRange type="range" min="0" max="100" defaultValue="50" aria-label="缩放" />
    <IconButton $w={16} aria-label="放大"><Icon w={8} stroke="#fff" strokeWidth="2"><path d="M4 0v8M0 4h8" /></Icon></IconButton>
    <ZoomLevel>100%</ZoomLevel>
  </StatusBar>
)

const Tasks = () => (
  <Taskbar>
    <TaskButton $w={48} aria-label="开始"><Icon fill="#fff" stroke="none"><path d="M0 2.500L7 1.500v6H0zM8 1.300L16 0v7.500H8zM0 8.500h7v6l-7-1zM8 8.500h8V16l-8-1.300z" /></Icon></TaskButton>
    <TaskButton $w={48} aria-label="Cortana"><Icon stroke="#fff" strokeWidth="2.500"><circle cx="8" cy="8" r="6.500" /></Icon></TaskButton>
    <TaskButton aria-label="任务视图"><Icon w={20} h={14} stroke="#fff"><path d="M4.500.5h11v13h-11zM2.500 2.500H.5v9h2M17.500 2.500h2v9h-2" /></Icon></TaskButton>
    <TaskButton $running aria-label="Outlook">
      <Icon w={22} stroke="none"><path d="M12 6h10v11H12z" fill="#fff" /><path d="M12 7l5 5 5-5" stroke="#0072c6" strokeWidth="1.500" /><path d="M0 2l13-2v22L0 20z" fill="#0072c6" /><ellipse cx="6.500" cy="11" rx="2.700" ry="3.500" stroke="#fff" strokeWidth="2" /></Icon>
    </TaskButton>
    <TaskButton aria-label="迅雷">
      <Icon w={22} stroke="none"><rect width="22" height="22" rx="2" fill="#f0f5fc" /><path d="M3 5c3 0 6 1 9 4 0-3 2-6 3-7v4c1-1 3-1 5 1-2 0-3 1-3 3 0 4-2 6-5 6l-5 5 1-5c-2-1-4-3-4-4h3C5 10 4 8 3 5z" fill="#3f8df0" /></Icon>
    </TaskButton>
    <TaskButton aria-label="浏览器">
      <Icon w={22} stroke="none"><circle cx="11" cy="11" r="10.500" fill="#25a5ec" /><path d="M17 4c0 3 0 4-1 5 1 5-4 8-7 6-2 1-3 2-4 2 0-2 1-3 1-5C5 7 10 5 13 7c1-2 2-2 4-3z" fill="#fff" /><path d="M9.500 13l3-4" stroke="#25a5ec" /></Icon>
    </TaskButton>
    <TaskButton aria-label="QQ音乐">
      <Icon w={24} stroke="none"><circle cx="12" cy="12" r="11.500" fill="#f8cf1c" /><path d="M8 3l7-3c0 3 1 4 3 5l-5 2 3 9" fill="#20b573" /><circle cx="11" cy="17" r="5" fill="#20b573" /></Icon>
    </TaskButton>
    <TaskButton $running aria-label="文件资源管理器">
      <Icon w={22} h={18} stroke="none"><path d="M0 0h9l2 2h11v16H0z" fill="#f8d775" /><path d="M0 5h22v13H0z" fill="#fbe08c" /><path d="M4 18v-7h14v7h-4v-4H8v4z" fill="#25a9e0" /></Icon>
    </TaskButton>
    <TaskButton $running aria-label="录屏">
      <Icon w={24} stroke="none"><circle cx="12" cy="12" r="11" fill="#111" stroke="#bbb" strokeWidth="2" /><circle cx="12" cy="12" r="8.500" stroke="#333" strokeWidth="2" /><circle cx="12" cy="12" r="6" fill="#e00000" /></Icon>
    </TaskButton>
    <TaskButton aria-label="画图">
      <Icon w={24} stroke="none"><circle cx="12" cy="12" r="11.500" fill="#f6b040" /><ellipse cx="13" cy="9" rx="9" ry="7" fill="#fbc968" /><circle cx="12" cy="5" r="2.500" fill="#3c9ddb" /><circle cx="7" cy="9" r="2.500" fill="#58b03c" /><circle cx="5" cy="14" r="2.500" fill="#e2452f" /><circle cx="12" cy="18" r="2" fill="#3a2008" /></Icon>
    </TaskButton>
    <TaskButton aria-label="Sg">
      <Icon w={22} stroke="none"><circle cx="11" cy="11" r="10" fill="#dcdfe4" stroke="#6780a8" strokeWidth="2" /><Glyph x={4} y={15} size={11} color="#444" bold italic>Sg</Glyph></Icon>
    </TaskButton>
    <TaskButton $running $active aria-label="Word">
      <WordIcon w={22} />
    </TaskButton>
    <Tray>
      <IconButton $w={24} aria-label="显示隐藏的图标"><Icon w={12} h={7} stroke="#fff" strokeWidth="1.500"><path d="M.5 6.500L6 1l5.500 5.500" /></Icon></IconButton>
      <IconButton $w={24} aria-label="电池"><Icon w={17} h={11} stroke="#fff"><path d="M5.500 2.500h9v7h-9zM15.500 4v4M1 1v2h4V1M2 0v2M4 0v2M1 3c0 3 4 3 4 0M3 5v4.500h2" /><path d="M7 4h6v4H7z" fill="#fff" stroke="none" /></Icon></IconButton>
      <IconButton $w={24} aria-label="音量"><Icon w={17} h={13} stroke="#fff"><path d="M.5 4.500h2l4-4v12l-4-4h-2zM8.500 4c1.500 1.500 1.500 3.500 0 5M10.500 2c3 2.500 3 6.500 0 9" /><path d="M13 0c3.500 3.500 3.500 9 0 13" stroke="#777" /></Icon></IconButton>
      <IconButton $w={26} aria-label="网络"><Icon w={14} h={13} stroke="#fff" strokeWidth="1.500"><path d="M1 12C1 5 6 1 13 1M4 12c0-5 4-8 9-8M7 12c0-3 3-5 6-5" /><circle cx="11.500" cy="11" r="1" fill="#fff" /></Icon></IconButton>
      <InputMode aria-label="输入法">中</InputMode>
      <IconButton $w={34} aria-label="微软拼音"><Icon w={14} stroke="none"><path d="M0 0h14v14H0z" fill="#fff" /><path d="M3 11V3l4 6 4-6v8" stroke="#111" strokeWidth="1.500" /></Icon></IconButton>
      <IconButton $w={38} aria-label="安全卫士">
        <Icon w={22} stroke="none"><circle cx="11" cy="11" r="10" fill="#0b2a16" stroke="#0fd665" strokeWidth="2" /><path d="M3 16h16c-4 6-12 6-16 0z" fill="#0fd665" /><Glyph x={4} y={15} size={12} color="#fff">21</Glyph></Icon>
      </IconButton>
      <Clock>11:40<br />2018-03-12</Clock>
      <ShowDesktop />
    </Tray>
  </Taskbar>
)

const App = () => (
  <Shell>
    <GlobalStyle />
    <TopBar />
    <TabRow>
      <Tab $file>文件</Tab>
      <Tab $active>开始</Tab>
      {tabs.map(t => <Tab key={t}>{t}</Tab>)}
      <Account href="#">登录<Avatar /></Account>
    </TabRow>
    <Ribbon>
      <ClipboardGroup />
      <FontGroup />
      <ParagraphGroup />
      <StylesGroup />
      <EditGroup />
      <CollapseButton aria-label="折叠功能区"><Icon w={9} h={6} strokeWidth="2"><path d="M.5 5l4-4 4 4" /></Icon></CollapseButton>
    </Ribbon>
    <Workspace>
      <TabStop aria-label="制表符"><Icon w={8} strokeWidth="2"><path d="M1 0v7h7" /></Icon></TabStop>
      <RulerRow>
        <Ruler>
          {rulerMarks.map((m, i) => (
            <RulerCell key={i}><i /><b><RulerNumber>{m}</RulerNumber></b></RulerCell>
          ))}
          <Marker $x={146} $y={-3}><Icon w={11} h={10} stroke="#777"><path d="M.5.5h10v4l-5 5-5-5z" fill="#fff" /></Icon></Marker>
          <Marker $x={116} $y={9}><Icon w={11} h={16} stroke="#777"><path d="M.5 15.500V5.500l5-5 5 5v10zM.5 9.500h10" fill="#fff" /></Icon></Marker>
          <Marker $x={669} $y={9}><Icon w={11} h={10} stroke="#777"><path d="M.5 9.500V5.500l5-5 5 5v4z" fill="#fff" /></Icon></Marker>
        </Ruler>
      </RulerRow>
      <SideRuler>
        <SideStart />
        {sideMarks.map(m => (
          <SideCell key={m} $wide={m > 9}><i /><b><span>{m}</span></b></SideCell>
        ))}
      </SideRuler>
      <PageHolder><Document /></PageHolder>
    </Workspace>
    <Status />
    <Tasks />
  </Shell>
)

export default App
